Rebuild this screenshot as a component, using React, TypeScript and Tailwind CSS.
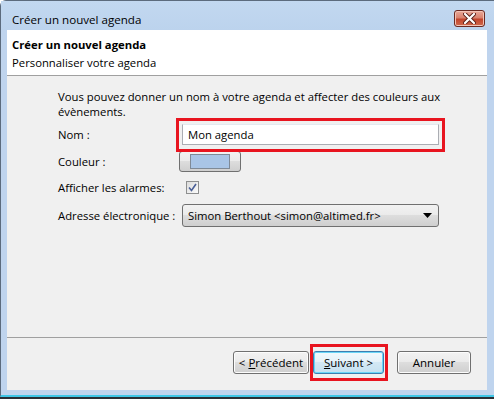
const font = { fontFamily: '"Open Sans", "Noto Sans", sans-serif' }

const WinButton = ({ children, focused }: { children: React.ReactNode; focused?: boolean }) => {
    return (
        <button
            className={
                'h-[23px] w-full whitespace-nowrap rounded-[3px] border text-[11.5px] text-black ' +
                (focused
                    ? 'border-[#3c7fb1] bg-[linear-gradient(#f3f9fc_0%,#e6f2f9_45%,#d3e8f4_50%,#c6e1f1_100%)] shadow-[inset_0_0_0_1px_#6bd6f7]'
                    : 'border-[#707070] bg-[linear-gradient(#f2f2f2_0%,#ebebeb_45%,#dddddd_50%,#cfcfcf_100%)] shadow-[inset_0_0_0_1px_#fcfcfc]')
            }
        >
            {children}
        </button>
    )
}

const App = () => {
    return (
        <div style={font} className="relative h-[399px] w-[494px] overflow-hidden bg-white text-[11.3px] leading-[15px] text-black">
            <div className="flex h-[397px] w-[494px] flex-col rounded-tl-[6px] border-l border-t border-b-2 border-[#5c6b7d] border-b-[#3fc6e6] bg-[#bfd4ee]">
                {/* title bar */}
                <div className="flex h-[29px] items-start justify-between bg-[linear-gradient(#c2d8f0,#bcd3ed)] pl-[11px] pr-[9px]">
                    <span className="mt-[11px] text-[11.6px]">Créer un nouvel agenda</span>
                    <div className="mt-[9px] flex h-[17px] w-[31px] items-center justify-center rounded-[3px] border border-[#6a2a22] bg-[linear-gradient(#e9a99a_0%,#d9826e_45%,#c2452d_55%,#cf6a4c_100%)] shadow-[inset_0_0_0_1px_#f2c3b6]">
                        <svg width="13" height="11" viewBox="0 0 13 11">
                            <path d="M2 1 L11 10 M11 1 L2 10" stroke="#5a2018" strokeWidth="4" strokeLinecap="round" />
                            <path d="M2 1 L11 10 M11 1 L2 10" stroke="#ffffff" strokeWidth="2.2" strokeLinecap="round" />
                        </svg>
                    </div>
                </div>

                {/* client area */}
                <div className="ml-[6px] flex h-[360px] w-[480px] flex-col bg-[#f0f0f0]">
                    <div className="h-[46px] border-b border-[#a0a0a0] bg-white pl-[5px] pt-[7px]">
                        <div className="font-bold">Créer un nouvel agenda</div>
                        <div className="mt-[3px]">Personnaliser votre agenda</div>
                    </div>

                    <div className="h-[262px] border-b border-[#a0a0a0] pl-[51px] pt-[13px]">
                        <p className="w-[392px]">
                            Vous pouvez donner un nom à votre agenda et affecter des couleurs aux évènements.
                        </p>

                        <div className="mt-[5px] grid grid-cols-[124px_257px] items-center whitespace-nowrap">
                            <span>Nom :</span>
                            <div className="relative h-[21px]">
                                <div className="h-[21px] border border-[#abadb3] border-t-[#e3e9ef] bg-white pl-[5px] pt-[2px]">Mon agenda</div>
                                <div className="absolute -left-[6px] -right-[6px] -top-[6px] -bottom-[7px] border-[3px] border-[#e8141f]" />
                            </div>

                            <span className="mt-[6px]">Couleur :</span>
                            <div className="mt-[6px] -ml-[3px] flex h-[21px] w-[62px] items-center justify-center rounded-[3px] border border-[#707070] bg-[linear-gradient(#f2f2f2_0%,#ebebeb_45%,#dddddd_50%,#cfcfcf_100%)]">
                                <div className="h-[15px] w-[40px] border border-[#7f8a96] bg-[#a9c5e6]" />
                            </div>

                            <span className="mt-[8px]">Afficher les alarmes:</span>
                            <div className="mt-[8px] ml-[4px] flex h-[13px] w-[13px] items-center justify-center border border-[#8e8f8f] bg-[linear-gradient(135deg,#dcdcdc,#fbfbfb)]">
                                <svg width="9" height="9" viewBox="0 0 9 9">
                                    <path d="M1 4.5 L3.5 7.5 L8 1" stroke="#4a5f97" strokeWidth="1.6" fill="none" />
                                </svg>
                            </div>

                            <span className="mt-[9px]">Adresse électronique :</span>
                            <div className="mt-[9px] flex h-[23px] items-center justify-between rounded-[3px] border border-[#707070] bg-[linear-gradient(#f2f2f2_0%,#ebebeb_45%,#dddddd_50%,#cfcfcf_100%)] pl-[5px] pr-[6px]">
                                <span>Simon Berthout &lt;simon@altimed.fr&gt;</span>
                                <svg width="9" height="5" viewBox="0 0 9 5">
                                    <path d="M0 0 H9 L4.5 5 Z" fill="#000" />
                                </svg>
                            </div>
                        </div>
                    </div>

                    <div className="flex justify-end pr-[16px] pt-[13px]">
                        <div className="w-[76px]">
                            <WinButton>
                                &lt; <u>P</u>récédent
                            </WinButton>
                        </div>
                        <div className="relative ml-[4px] w-[71px]">
                            <WinButton focused>
                                <u>S</u>uivant &gt;
                            </WinButton>
                            <div className="absolute -left-[3px] -right-[4px] -top-[7px] -bottom-[7px] border-[3px] border-[#e8141f]" />
                        </div>
                        <div className="ml-[13px] w-[74px]">
                            <WinButton>Annuler</WinButton>
                        </div>
                    </div>
                </div>
            </div>
            <div className="h-[2px] bg-[#2a2f36]" />
        </div>
    )
}

export default App
